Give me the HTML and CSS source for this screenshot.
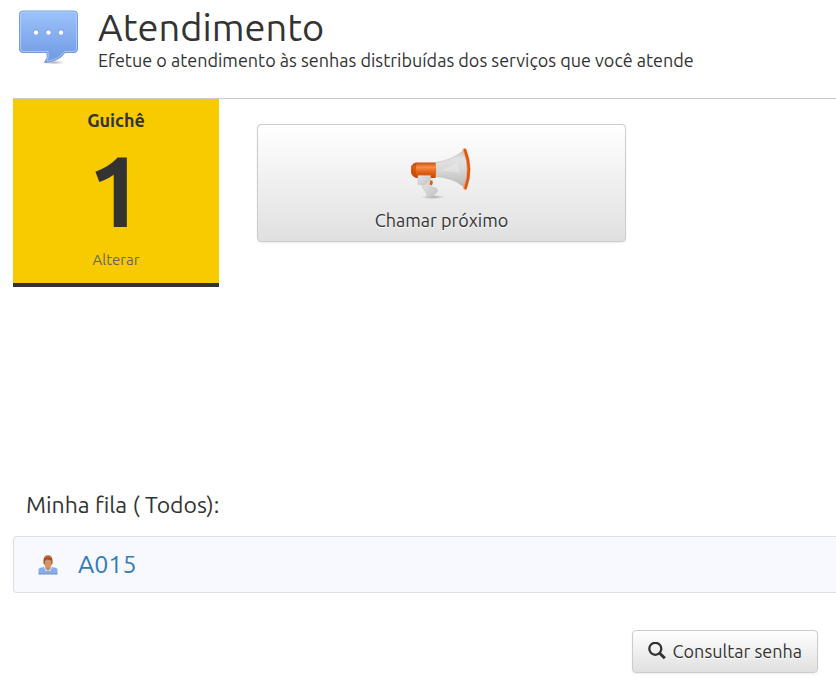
FILE: index.html
```html
<!DOCTYPE html>
<html lang="pt-BR">
<head>
<meta charset="utf-8">
<title>Atendimento</title>
<meta name="viewport" content="width=device-width, initial-scale=1">
<link rel="stylesheet" href="styles.css">
</head>
<body>
<header class="page-header">
  <svg class="page-icon" viewBox="0 0 64 64" aria-hidden="true">
    <defs>
      <linearGradient id="bubble" x1="0" y1="0" x2="0" y2="1">
        <stop offset="0" stop-color="#9cc3fa"/>
        <stop offset="1" stop-color="#6f98e2"/>
      </linearGradient>
      <radialGradient id="shade">
        <stop offset="0" stop-color="#000" stop-opacity=".3"/>
        <stop offset="1" stop-color="#000" stop-opacity="0"/>
      </radialGradient>
    </defs>
    <ellipse cx="38" cy="55.500" rx="11" ry="2" fill="url(#shade)"/>
    <path d="M7 4H58Q61.500 4 61.500 7.500V42Q61.500 45.500 58 45.500H49Q43 54.500 28.500 55.500Q32.500 51 31 45.500H7Q3.500 45.500 3.500 42V7.500Q3.500 4 7 4Z" fill="url(#bubble)" stroke="#7398dc"/>
    <path d="M7.500 5H57.500Q60.500 5 60.500 8V41.500Q60.500 44.500 57.500 44.500H48.500Q43 52.500 31 54Q33 49 32 44.500H7.500Q4.500 44.500 4.500 41.500V8Q4.500 5 7.500 5Z" fill="none" stroke="#b9d5ff" stroke-opacity=".7"/>
    <g fill="#5f88cd" fill-opacity=".4"><circle cx="20" cy="24.700" r="2.800"/><circle cx="32.500" cy="24.700" r="2.800"/><circle cx="45" cy="24.700" r="2.800"/></g>
    <g fill="#fff"><circle cx="20" cy="25.500" r="2.200"/><circle cx="32.500" cy="25.500" r="2.200"/><circle cx="45" cy="25.500" r="2.200"/></g>
  </svg>
  <div>
    <h1 class="page-title">Atendimento</h1>
    <p class="page-subtitle">Efetue o atendimento às senhas distribuídas dos serviços que você atende</p>
  </div>
</header>
<main>
  <div class="service">
    <section class="desk">
      <h2 class="desk-label">Guichê</h2>
      <div class="desk-number">1</div>
      <a class="desk-change" href="#">Alterar</a>
    </section>
    <button class="btn btn-call" type="button">
      <svg class="horn" viewBox="0 0 64 64" aria-hidden="true">
        <defs>
          <linearGradient id="cone" x1="0" y1="0" x2="0" y2="1">
            <stop offset="0" stop-color="#c4c4c4"/>
            <stop offset=".25" stop-color="#e2e2e2"/>
            <stop offset=".5" stop-color="#dadada"/>
            <stop offset="1" stop-color="#b8b8b8"/>
          </linearGradient>
          <linearGradient id="body" x1="0" y1="0" x2="0" y2="1">
            <stop offset="0" stop-color="#c74c0e"/>
            <stop offset=".3" stop-color="#f2924a"/>
            <stop offset=".6" stop-color="#e56318"/>
            <stop offset="1" stop-color="#c24507"/>
          </linearGradient>
          <linearGradient id="grip" x1="0" y1="0" x2="1" y2="1">
            <stop offset="0" stop-color="#e4e4e4"/>
            <stop offset="1" stop-color="#c2c2c2"/>
          </linearGradient>
        </defs>
        <ellipse cx="23" cy="52" rx="12" ry="2" fill="url(#shade)"/>
        <path d="M20 35.500h2.500q.800 2.500-.5 5l-2.500-1z" fill="#dd5b16"/>
        <path d="M12 39L18 37Q18.500 41.500 22 42Q27.500 42.500 27.500 45.500Q27 48.500 24 49.500Q23.500 52 22 52H18Q15.500 46 12 41Z" fill="url(#grip)" stroke="#bdbdbd" stroke-width=".5"/>
        <path d="M25 17.500Q43 15.500 54.500 4.500Q60 24 54.500 42.500Q42 32 25 31.500Z" fill="url(#cone)" stroke="#b4b4b4" stroke-width=".5"/>
        <path d="M28 27Q40 23 47 17L50 28Q40 25 28 27Z" fill="#f1f1f1" fill-opacity=".4"/>
        <path d="M6 17.500H25.500Q27 25 25.500 33H6Q1 31 1 25T6 17.500Z" fill="url(#body)"/>
        <path d="M1 21Q3 18 6.500 17.500Q5 25 6.500 32.500Q2.500 32 1 28Z" fill="#c94708" fill-opacity=".7"/>
        <path d="M8 30.500H20.500V35L15 39.500H8Z" fill="url(#grip)" stroke="#c0c0c0" stroke-width=".5"/>
        <path d="M54.500 5Q62.500 24 55 43" fill="none" stroke="#f0a078" stroke-width="3.600" stroke-linecap="round"/>
        <path d="M55 5Q62.500 24 55.500 43" fill="none" stroke="#dc5811" stroke-width="2.600" stroke-linecap="round"/>
      </svg>
      <span>Chamar próximo</span>
    </button>
  </div>
  <section class="queue">
    <h2 class="queue-title">Minha fila ( Todos):</h2>
    <ul class="queue-list">
      <li class="queue-item">
        <svg class="person" viewBox="0 0 20 20" aria-hidden="true">
          <path d="M.500 19V14.500Q.500 13 4 12.500L10 11L16 12.500Q19.500 13 19.500 14.500V19Z" fill="#86aee8"/>
          <path d="M.500 19H19.500" stroke="#6c8fc4"/>
          <path d="M6 12.500L8 16H12L14 12.500L10 11Z" fill="#eef4fc"/>
          <path d="M7.500 10H12.500V14L10 16L7.500 14Z" fill="#c18d5f"/>
          <ellipse cx="10" cy="7.500" rx="4" ry="5.500" fill="#cd976b"/>
          <path d="M5.500 9Q4.500 .5 10 .3Q15.500 .5 14.500 9L13.300 9.500V5.500L9 4.500L6.800 6V9Z" fill="#a9501f"/>
          <path d="M7 2.500Q10 .5 13 2.500" fill="none" stroke="#cf7740"/>
        </svg>
        <a class="ticket" href="#">A015</a>
      </li>
    </ul>
  </section>
  <div class="actions">
    <button class="btn btn-search" type="button">
      <svg class="search" viewBox="0 0 18 18" aria-hidden="true">
        <circle cx="7.300" cy="6.800" r="6" fill="none" stroke="#333" stroke-width="2.300"/>
        <path d="M11.500 11L16.800 16.300" stroke="#333" stroke-width="3"/>
      </svg>
      <span>Consultar senha</span>
    </button>
  </div>
</main>
</body>
</html>
```
FILE: styles.css
```css
* {
  box-sizing: border-box;
}

body {
  margin: 0;
  padding-left: 13px;
  background: #fff;
  color: #333;
  font-family: Ubuntu, "Noto Sans", "Open Sans", sans-serif;
  font-size: 18px;
  line-height: 24px;
}

h1,
h2,
p,
ul {
  margin: 0;
  padding: 0;
  font-weight: 400;
}

.page-header {
  display: flex;
  gap: 18px;
  padding: 7px 0 26px 3px;
  border-bottom: 1px solid #ccc;
}

.page-icon {
  flex: none;
  width: 64px;
  height: 64px;
}

.page-title {
  font-size: 38px;
  line-height: 41px;
}

.service {
  display: flex;
  align-items: flex-start;
  gap: 38px;
  min-height: 392px;
}

.desk {
  flex: none;
  width: 206px;
  padding: 9px 0 11px;
  border-bottom: 4px solid #333;
  background: #f8ca00;
  text-align: center;
}

.desk-label {
  font-size: 18px;
  font-weight: 700;
}

.desk-number {
  font-size: 100px;
  font-weight: 700;
  line-height: 116px;
}

.desk-change {
  display: block;
  color: #666;
  font-size: 15px;
  text-decoration: none;
}

.btn {
  display: flex;
  align-items: center;
  justify-content: center;
  border: 1px solid #ccc;
  border-radius: 4px;
  background: linear-gradient(#fff, #e0e0e0);
  box-shadow: 0 1px 2px rgba(0, 0, 0, .08);
  color: #333;
  font: inherit;
  line-height: 22px;
  text-shadow: 0 1px 0 #fff;
  cursor: pointer;
}

.btn-call {
  flex: 0 1 369px;
  flex-direction: column;
  margin-top: 25px;
  padding: 20px 16px 10px;
}

.horn {
  width: 64px;
  height: 64px;
}

.queue-title {
  padding-left: 13px;
  font-size: 23px;
  line-height: 28px;
}

.queue-list {
  margin-top: 17px;
  list-style: none;
}

.queue-item {
  display: flex;
  align-items: center;
  gap: 20px;
  padding: 12px 24px;
  border: 1px solid #dedee6;
  border-right: 0;
  border-radius: 4px 0 0 4px;
  background: #f8f8ff;
}

.person {
  width: 20px;
  height: 20px;
}

.ticket {
  color: #337ab7;
  font-size: 25px;
  line-height: 31px;
  text-decoration: none;
}

.actions {
  display: flex;
  justify-content: flex-end;
  padding: 37px 18px 6px 0;
}

.btn-search {
  gap: 7px;
  padding: 9px 15px 10px;
}

.search {
  width: 18px;
  height: 18px;
}
```
